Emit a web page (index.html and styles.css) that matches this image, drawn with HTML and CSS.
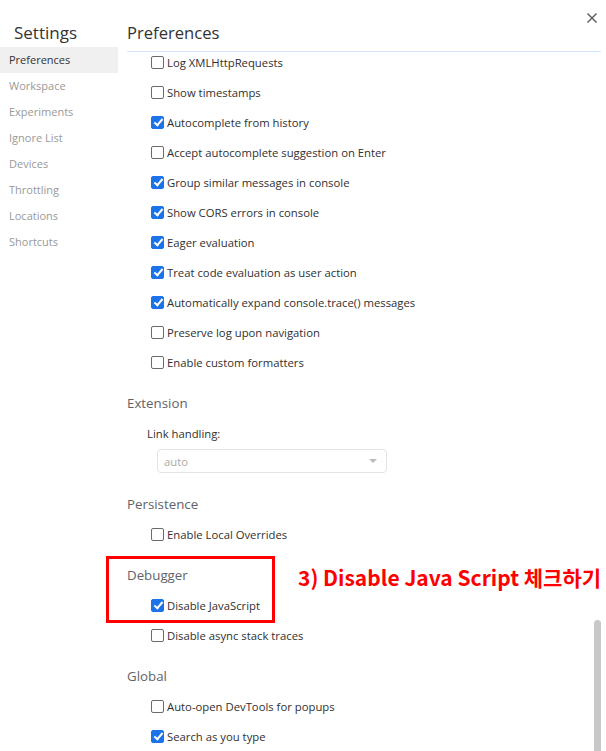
FILE: index.html
```html
<!DOCTYPE html>
<html>
<head>
<meta charset="utf-8">
<link rel="stylesheet" href="styles.css">
</head>
<body>
<div class="app">
  <aside class="sidebar">
    <div class="side-title">Settings</div>
    <nav class="nav">
      <div class="nav-item active">Preferences</div>
      <div class="nav-item">Workspace</div>
      <div class="nav-item">Experiments</div>
      <div class="nav-item">Ignore List</div>
      <div class="nav-item">Devices</div>
      <div class="nav-item">Throttling</div>
      <div class="nav-item">Locations</div>
      <div class="nav-item">Shortcuts</div>
    </nav>
  </aside>
  <main class="main">
    <header class="main-header">Preferences</header>
    <div class="content">
      <section class="section first">
        <label class="row"><span class="cb"></span>Log XMLHttpRequests</label>
        <label class="row"><span class="cb"></span>Show timestamps</label>
        <label class="row"><span class="cb on"></span>Autocomplete from history</label>
        <label class="row"><span class="cb"></span>Accept autocomplete suggestion on Enter</label>
        <label class="row"><span class="cb on"></span>Group similar messages in console</label>
        <label class="row"><span class="cb on"></span>Show CORS errors in console</label>
        <label class="row"><span class="cb on"></span>Eager evaluation</label>
        <label class="row"><span class="cb on"></span>Treat code evaluation as user action</label>
        <label class="row"><span class="cb on"></span>Automatically expand console.trace() messages</label>
        <label class="row"><span class="cb"></span>Preserve log upon navigation</label>
        <label class="row"><span class="cb"></span>Enable custom formatters</label>
      </section>
      <section class="section">
        <h2 class="sec-title">Extension</h2>
        <div class="row field-label">Link handling:</div>
        <div class="select"><span>auto</span><span class="caret"></span></div>
      </section>
      <section class="section">
        <h2 class="sec-title">Persistence</h2>
        <label class="row"><span class="cb"></span>Enable Local Overrides</label>
      </section>
      <section class="section">
        <h2 class="sec-title">Debugger</h2>
        <label class="row"><span class="cb on"></span>Disable JavaScript</label>
        <label class="row"><span class="cb"></span>Disable async stack traces</label>
      </section>
      <section class="section">
        <h2 class="sec-title">Global</h2>
        <label class="row"><span class="cb"></span>Auto-open DevTools for popups</label>
        <label class="row"><span class="cb on"></span>Search as you type</label>
      </section>
    </div>
  </main>
  <svg class="close" width="12" height="12" viewBox="0 0 12 12"><path d="M1.5 1.5L10.5 10.5M10.5 1.5L1.5 10.5" stroke="#5f6368" stroke-width="1.5" fill="none"/></svg>
  <div class="scrollbar"></div>
  <div class="highlight"></div>
  <div class="note">3) Disable Java Script 체크하기</div>
</div>
</body>
</html>
```
FILE: styles.css
```css
* { box-sizing: border-box; }
html, body { margin: 0; padding: 0; background: #fff; }
body {
  font-family: "Open Sans", "Noto Sans", sans-serif;
  font-size: 11.3px;
  color: #303030;
  width: 606px;
  height: 751px;
  overflow: hidden;
}
.app {
  position: relative;
  display: flex;
  height: 751px;
}
.sidebar {
  width: 118px;
  flex: none;
}
.side-title {
  height: 47px;
  padding: 20px 0 0 14px;
  font-size: 17px;
  line-height: 26px;
  color: #333;
}
.nav-item {
  height: 26px;
  line-height: 26px;
  padding-left: 9px;
  font-size: 11px;
  color: #999;
}
.nav-item.active {
  background: #f0f0f0;
  color: #333;
}
.main {
  flex: 1;
  padding-left: 9px;
  padding-right: 5px;
}
.main-header {
  height: 52px;
  padding-top: 20px;
  font-size: 16.6px;
  line-height: 26px;
  color: #333;
  border-bottom: 1px solid #d2e3fc;
}
.section { padding-top: 11px; }
.section.first { padding-top: 0; }
.sec-title {
  margin: 0 0 10px;
  height: 20px;
  line-height: 20px;
  font-size: 13.3px;
  font-weight: normal;
  color: #5f6368;
}
.row {
  display: flex;
  align-items: center;
  height: 20px;
  margin-bottom: 10px;
  padding-left: 24px;
  white-space: nowrap;
}
.field-label { padding-left: 20px; margin-bottom: 6px; }
.cb {
  width: 13px;
  height: 13px;
  border: 1px solid #6b6b6b;
  border-radius: 2px;
  margin-right: 3px;
  flex: none;
  position: relative;
}
.cb.on {
  background: #1a73e8;
  border-color: #1a73e8;
}
.cb.on::after {
  content: "";
  position: absolute;
  left: 3.5px;
  top: 0.5px;
  width: 3px;
  height: 7px;
  border: solid #fff;
  border-width: 0 2px 2px 0;
  transform: rotate(40deg);
}
.select {
  margin: 0 0 10px 30px;
  width: 230px;
  height: 24px;
  border: 1px solid #e3e3e3;
  border-radius: 4px;
  display: flex;
  align-items: center;
  justify-content: space-between;
  padding: 0 9px 0 6px;
  color: #aaa;
}
.caret {
  width: 0;
  height: 0;
  border-left: 4px solid transparent;
  border-right: 4px solid transparent;
  border-top: 4px solid #bbb;
}
.close {
  position: absolute;
  left: 586px;
  top: 12px;
}
.scrollbar {
  position: absolute;
  left: 594px;
  top: 620px;
  width: 7px;
  height: 140px;
  background: #c8c8c8;
  border-radius: 4px 4px 0 0;
}
.highlight {
  position: absolute;
  left: 106px;
  top: 556px;
  width: 169px;
  height: 67px;
  border: 3px solid #ff0000;
}
.note {
  position: absolute;
  left: 298px;
  top: 561px;
  font-family: "Noto Sans CJK KR", "Noto Sans", sans-serif;
  font-weight: bold;
  font-size: 21px;
  line-height: 32px;
  color: #ff0000;
  white-space: nowrap;
}
```
